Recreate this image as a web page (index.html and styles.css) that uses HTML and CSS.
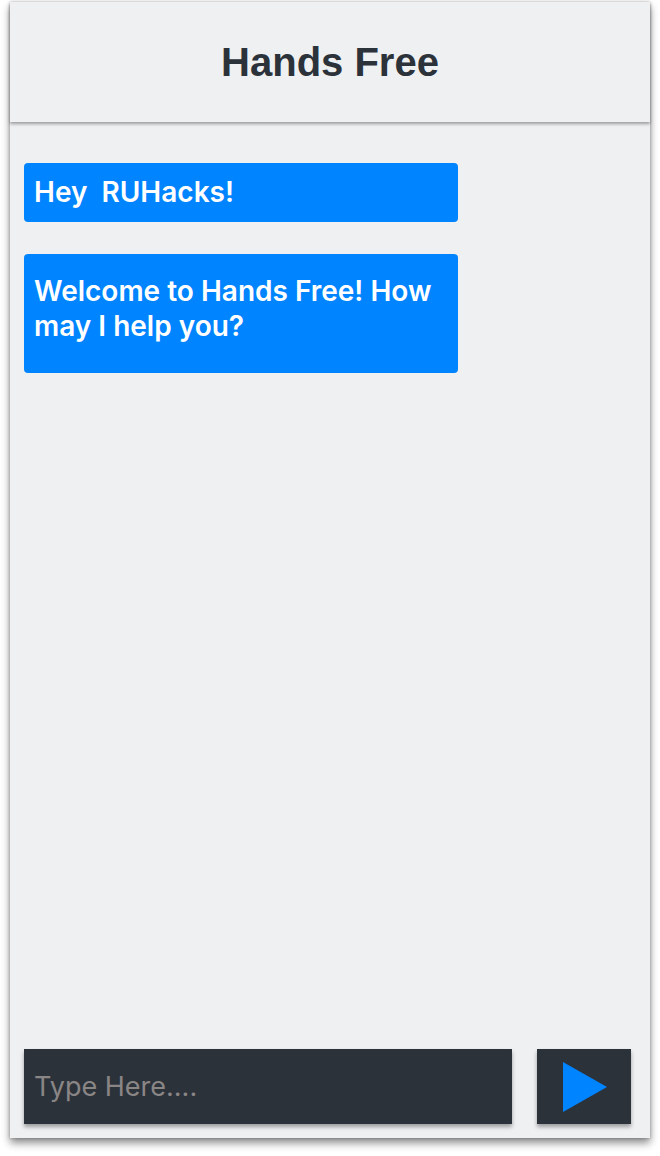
FILE: index.html
```html
<!DOCTYPE html>
<html>
<head>
<meta charset="utf-8">
<link rel="stylesheet" href="styles.css">
</head>
<body>
<div class="app">
  <header class="header"><h1 class="title">Hands Free</h1></header>
  <main class="messages">
    <div class="bubble">Hey&nbsp; RUHacks!</div>
    <div class="bubble bubble-tall">Welcome to Hands Free! How may I help you?</div>
  </main>
  <footer class="composer">
    <div class="input"><span class="placeholder">Type Here....</span></div>
    <button class="send" type="button">
      <svg width="44" height="50" viewBox="0 0 44 50"><polygon points="0,0 44,25 0,50" fill="#0084ff"/></svg>
    </button>
  </footer>
</div>
</body>
</html>
```

FILE: styles.css
```css
html, body { margin: 0; padding: 0; background: #ffffff; }
body { padding: 2px 10px 18px 10px; width: 640px; }
.app {
  width: 640px;
  height: 1136px;
  background: #eff0f2;
  box-shadow: 0 5px 8px rgba(0,0,0,0.45), 0 0 3px rgba(0,0,0,0.25);
  display: flex;
  flex-direction: column;
}
.header {
  height: 120px;
  display: flex;
  align-items: center;
  justify-content: center;
  box-shadow: 0 2px 3px rgba(0,0,0,0.35);
  position: relative;
  z-index: 1;
}
.title {
  margin: 0;
  font-family: "Liberation Sans", Arial, sans-serif;
  font-weight: bold;
  font-size: 40px;
  color: #2c323a;
}
.messages {
  flex: 1;
  padding: 41px 0 0 14px;
  display: flex;
  flex-direction: column;
  gap: 32px;
}
.bubble {
  width: 434px;
  box-sizing: border-box;
  background: #0084ff;
  color: #ffffff;
  border-radius: 4px;
  font-family: Inter, "Noto Sans", sans-serif;
  font-weight: 600;
  font-size: 28px;
  line-height: 35px;
  padding: 12px 10px;
}
.bubble-tall { padding: 20px 10px 29px; }
.composer {
  display: flex;
  gap: 25px;
  padding: 0 19px 14px 14px;
}
.input {
  flex: 1;
  height: 75px;
  background: #2c323a;
  box-shadow: 0 3px 4px rgba(0,0,0,0.35);
  display: flex;
  align-items: center;
  padding-left: 10px;
}
.placeholder {
  font-family: Inter, "Liberation Sans", sans-serif;
  font-weight: 400;
  font-size: 27px;
  color: #8a8686;
}
.send {
  width: 94px;
  height: 75px;
  border: 0;
  padding: 0;
  background: #2c323a;
  box-shadow: 0 3px 4px rgba(0,0,0,0.35);
  display: flex;
  align-items: center;
  justify-content: center;
}
.send svg { display: block; margin-left: 1px; }
```
